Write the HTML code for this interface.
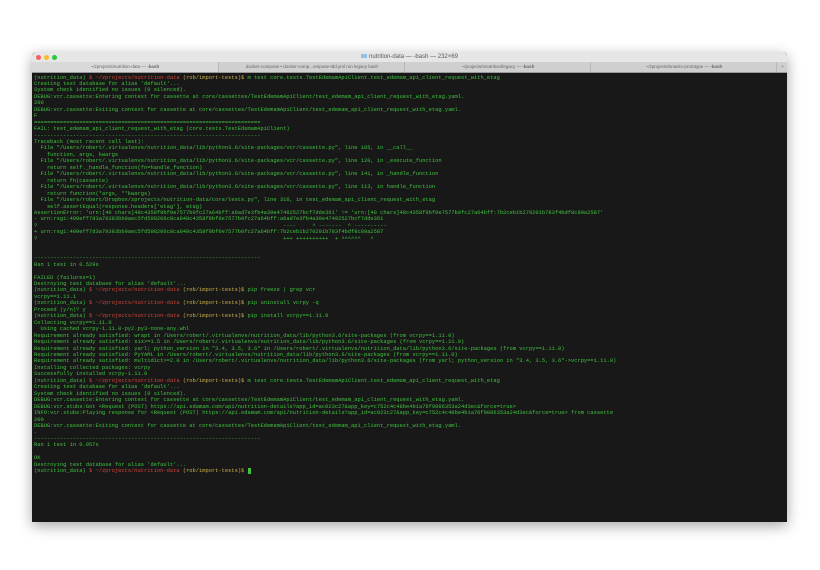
<!DOCTYPE html>
<html><head><meta charset="utf-8"><style>
html,body{margin:0;padding:0;background:#fff;width:820px;height:570px;overflow:hidden}
.win{position:absolute;left:32px;top:52px;width:755px;height:470px;background:#181818;border-radius:4px 4px 0 0;box-shadow:0 4px 14px rgba(0,0,0,.35);overflow:hidden}
.title{position:absolute;left:0;top:0;width:755px;height:10px;background:#e6e6e6;font:6px "Liberation Sans",sans-serif;color:#555;text-align:center;line-height:10px}
.dot{position:absolute;top:2.5px;width:5px;height:5px;border-radius:50%}
.tabs{position:absolute;left:0;top:10px;width:755px;height:10px;background:#cfcfcf;border-bottom:1px solid #999;font:4.5px "Liberation Sans",sans-serif;color:#666;line-height:10px}
.tab{position:absolute;top:0;height:10px;text-align:center;border-left:1px solid #b8b8b8}
.term{position:absolute;left:2px;top:22.5px;font:5.4px/6.46px "Liberation Mono",monospace;color:#3fc23f;white-space:pre;margin:0}
.r{color:#d0443a}.y{color:#c9b04a}
.cur{background:#3fc23f;color:#3fc23f}
</style></head><body>
<div class="win">
<div class="title"><span class="dot" style="left:4px;background:#fc5f57"></span><span class="dot" style="left:12px;background:#fdbc2e"></span><span class="dot" style="left:20px;background:#28c840"></span><span style="display:inline-block;width:6px;height:4px;background:#8fc0e8;margin-right:2px;vertical-align:middle"></span>nutrition-data — -bash — 232×69</div>
<div class="tabs">
<div class="tab" style="left:0;width:186px;border-left:none;background:#d9d9d9">~/zprojects/nutrition-data — <b>-bash</b></div>
<div class="tab" style="left:186px;width:186px">docker-compose • docker-comp...ompose-tdd.yml run legacy bash</div>
<div class="tab" style="left:372px;width:186px">~/projects/onutrition/legacy — <b>-bash</b></div>
<div class="tab" style="left:558px;width:186px">~/zprojects/snacks-prototype — <b>-bash</b></div>
<div class="tab" style="left:744px;width:11px">+</div>
</div>
<pre class="term">(nutrition_data) <span class="r">$ ~/zprojects/nutrition-data</span> <span class="y">(rob/import-tests)$</span> m test core.tests.TestEdemamApiClient.test_edemam_api_client_request_with_etag
Creating test database for alias 'default'...
System check identified no issues (0 silenced).
DEBUG:vcr.cassette:Entering context for cassette at core/cassettes/TestEdemamApiClient/test_edemam_api_client_request_with_etag.yaml.
200
DEBUG:vcr.cassette:Exiting context for cassette at core/cassettes/TestEdemamApiClient/test_edemam_api_client_request_with_etag.yaml.
F
======================================================================
FAIL: test_edemam_api_client_request_with_etag (core.tests.TestEdemamApiClient)
----------------------------------------------------------------------
Traceback (most recent call last):
  File "/Users/robert/.virtualenvs/nutrition_data/lib/python3.6/site-packages/vcr/cassette.py", line 105, in __call__
    function, args, kwargs
  File "/Users/robert/.virtualenvs/nutrition_data/lib/python3.6/site-packages/vcr/cassette.py", line 120, in _execute_function
    return self._handle_function(fn=handle_function)
  File "/Users/robert/.virtualenvs/nutrition_data/lib/python3.6/site-packages/vcr/cassette.py", line 141, in _handle_function
    return fn(cassette)
  File "/Users/robert/.virtualenvs/nutrition_data/lib/python3.6/site-packages/vcr/cassette.py", line 113, in handle_function
    return function(*args, **kwargs)
  File "/Users/robert/Dropbox/zprojects/nutrition-data/core/tests.py", line 316, in test_edemam_api_client_request_with_etag
    self.assertEqual(response.headers['etag'], etag)
AssertionError: 'urn:[40 chars]48c4358f9bf0e7577b0fc27a64bff:a6ad7e3fb4a39e47492527bcf7dde361' != 'urn:[40 chars]48c4358f9bf0e7577b0fc27a64bff:7b2ceb1b270201b783f4bdf8c89a2587'
- urn:rsg1:499eff7d3a79383bb9aec5fd598206c8ca848c4358f9bf0e7577b0fc27a64bff:a6ad7e3fb4a39e47492527bcf7dde361
?                                                                            ----     ^ -------  ^ ----------
+ urn:rsg1:499eff7d3a79383bb9aec5fd598206c8ca848c4358f9bf0e7577b0fc27a64bff:7b2ceb1b270201b783f4bdf8c89a2587
?                                                                            +++ ++++++++++  + ^^^^^^   ^


----------------------------------------------------------------------
Ran 1 test in 0.529s

FAILED (failures=1)
Destroying test database for alias 'default'...
(nutrition_data) <span class="r">$ ~/zprojects/nutrition-data</span> <span class="y">(rob/import-tests)$</span> pip freeze | grep vcr
vcrpy==1.11.1
(nutrition_data) <span class="r">$ ~/zprojects/nutrition-data</span> <span class="y">(rob/import-tests)$</span> pip uninstall vcrpy -q
Proceed (y/n)? y
(nutrition_data) <span class="r">$ ~/zprojects/nutrition-data</span> <span class="y">(rob/import-tests)$</span> pip install vcrpy==1.11.0
Collecting vcrpy==1.11.0
  Using cached vcrpy-1.11.0-py2.py3-none-any.whl
Requirement already satisfied: wrapt in /Users/robert/.virtualenvs/nutrition_data/lib/python3.6/site-packages (from vcrpy==1.11.0)
Requirement already satisfied: six>=1.5 in /Users/robert/.virtualenvs/nutrition_data/lib/python3.6/site-packages (from vcrpy==1.11.0)
Requirement already satisfied: yarl; python_version in "3.4, 3.5, 3.6" in /Users/robert/.virtualenvs/nutrition_data/lib/python3.6/site-packages (from vcrpy==1.11.0)
Requirement already satisfied: PyYAML in /Users/robert/.virtualenvs/nutrition_data/lib/python3.6/site-packages (from vcrpy==1.11.0)
Requirement already satisfied: multidict>=2.0 in /Users/robert/.virtualenvs/nutrition_data/lib/python3.6/site-packages (from yarl; python_version in "3.4, 3.5, 3.6"->vcrpy==1.11.0)
Installing collected packages: vcrpy
Successfully installed vcrpy-1.11.0
(nutrition_data) <span class="r">$ ~/zprojects/nutrition-data</span> <span class="y">(rob/import-tests)$</span> m test core.tests.TestEdemamApiClient.test_edemam_api_client_request_with_etag
Creating test database for alias 'default'...
System check identified no issues (0 silenced).
DEBUG:vcr.cassette:Entering context for cassette at core/cassettes/TestEdemamApiClient/test_edemam_api_client_request_with_etag.yaml.
DEBUG:vcr.stubs:Got &lt;Request (POST) https://api.edamam.com/api/nutrition-details?app_id=ac023c27&amp;app_key=c752c4c48be4b1a76f9886353a24d3ec&amp;force=true&gt;
INFO:vcr.stubs:Playing response for &lt;Request (POST) https://api.edamam.com/api/nutrition-details?app_id=ac023c27&amp;app_key=c752c4c48be4b1a76f9886353a24d3ec&amp;force=true&gt; from cassette
200
DEBUG:vcr.cassette:Exiting context for cassette at core/cassettes/TestEdemamApiClient/test_edemam_api_client_request_with_etag.yaml.
.
----------------------------------------------------------------------
Ran 1 test in 0.057s

OK
Destroying test database for alias 'default'...
(nutrition_data) <span class="r">$ ~/zprojects/nutrition-data</span> <span class="y">(rob/import-tests)$</span> <span class="cur">_</span></pre>
</div>
</body></html>
